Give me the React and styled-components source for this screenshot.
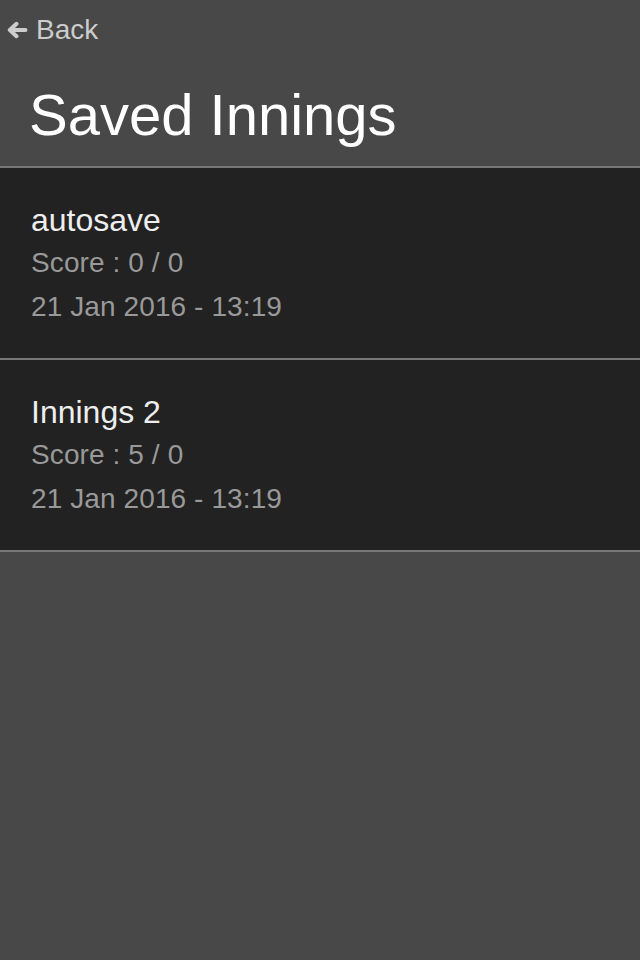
import styled, { createGlobalStyle } from "styled-components";

const bgGrey = "#484848";
const listBg = "#222222";
const lineGrey = "#777777";

const saves = [
  { name: "autosave", runs: 0, wickets: 0, date: "21 Jan 2016 - 13:19" },
  { name: "Innings 2", runs: 5, wickets: 0, date: "21 Jan 2016 - 13:19" },
];

export default function App() {
  return (
    <>
      <GlobalStyle />
      <Page>
        <Header>
          <BackButton>
            <svg width="22" height="18" viewBox="0 0 22 18">
              <path
                d="M19.5 9H4M10.5 2.8L3.8 9L10.5 15.2"
                fill="none"
                stroke="#cccccc"
                strokeWidth="4"
                strokeLinecap="round"
                strokeLinejoin="round"
              />
            </svg>
            <BackText>Back</BackText>
          </BackButton>
          <Title>Saved Innings</Title>
        </Header>
        <List>
          {saves.map((s) => (
            <Row key={s.name}>
              <Name>{s.name}</Name>
              <Detail>
                Score : {s.runs} / {s.wickets}
              </Detail>
              <Detail>{s.date}</Detail>
            </Row>
          ))}
        </List>
      </Page>
    </>
  );
}

const GlobalStyle = createGlobalStyle`
  html, body {
    margin: 0;
    padding: 0;
    background: ${bgGrey};
  }
  body {
    font-family: "Liberation Sans", Arial, sans-serif;
  }
`;

const Page = styled.div`
  width: 640px;
  min-height: 960px;
  background: ${bgGrey};
`;

const Header = styled.header`
  padding: 10px 0 21px 0;
  border-bottom: 2px solid ${lineGrey};
`;

const BackButton = styled.div`
  display: flex;
  align-items: center;
  height: 40px;
  padding-left: 6px;
  gap: 8px;
  cursor: pointer;
`;

const BackText = styled.span`
  font-size: 28px;
  line-height: 40px;
  color: #cccccc;
`;

const Title = styled.h1`
  margin: 35px 0 0 0;
  padding-left: 29px;
  font-size: 58px;
  line-height: 60px;
  font-weight: 400;
  color: #ffffff;
`;

const List = styled.div`
  background: ${bgGrey};
`;

const Row = styled.div`
  background: ${listBg};
  padding: 31px 0 29px 31px;
  border-bottom: 2px solid ${lineGrey};
`;

const Name = styled.div`
  font-size: 32px;
  line-height: 42px;
  color: #eeeeee;
`;

const Detail = styled.div`
  font-size: 28px;
  line-height: 44px;
  letter-spacing: 0.1px;
  color: #999999;
`;
